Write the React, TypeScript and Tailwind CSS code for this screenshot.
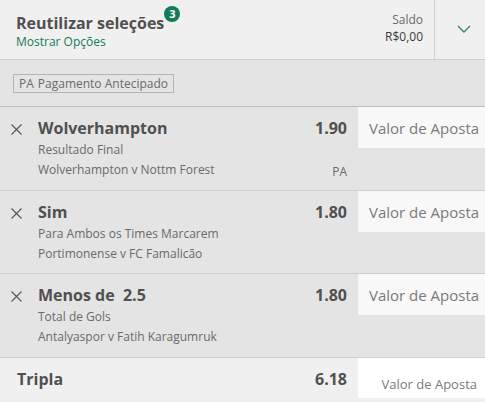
import React from 'react';

interface Selection {
  id: string;
  name: string;
  market: string;
  fixture: string;
  odds: string;
  earlyPayout?: boolean;
}

const selections: Selection[] = [
  {
    id: 'wolves',
    name: 'Wolverhampton',
    market: 'Resultado Final',
    fixture: 'Wolverhampton v Nottm Forest',
    odds: '1.90',
    earlyPayout: true,
  },
  {
    id: 'sim',
    name: 'Sim',
    market: 'Para Ambos os Times Marcarem',
    fixture: 'Portimonense v FC Famalicão',
    odds: '1.80',
  },
  {
    id: 'menos',
    name: 'Menos de  2.5',
    market: 'Total de Gols',
    fixture: 'Antalyaspor v Fatih Karagumruk',
    odds: '1.80',
  },
];

const Header: React.FC = () => (
  <header className="flex h-[60px] border-b border-[#cfcfcf] bg-[#f0f0f0]">
    <div className="flex-1 pl-4 pt-3">
      <div className="flex">
        <h1 className="text-base leading-[22px] font-bold">Reutilizar seleções</h1>
        <span className="-mt-1.5 flex h-4 w-4 items-center justify-center rounded-full bg-[#147b57] text-[11px] leading-4 font-bold text-white">
          3
        </span>
      </div>
      <button className="block text-xs leading-4 text-[#147b57]">Mostrar Opções</button>
    </div>
    <div className="pr-[11px] pt-[11px] text-right text-xs leading-[17px]">
      <div className="text-[#6a6a6a]">Saldo</div>
      <div className="text-[#3c3c3c]">R$0,00</div>
    </div>
    <button
      aria-label="Minimizar"
      className="flex w-[51px] items-center border-l border-[#cfcfcf] pl-[22px]"
    >
      <svg width="14" height="9" viewBox="0 0 14 9" fill="none" stroke="#2f8a6b" strokeWidth="1.4">
        <path d="M1 1l6 6 6-6" />
      </svg>
    </button>
  </header>
);

const SelectionRow: React.FC<{ item: Selection }> = ({ item }) => (
  <li className="flex h-[84px] border-b border-[#cfcfcf] even:h-[83px]">
    <button aria-label={`Remover ${item.name}`} className="w-[38px] self-start pl-[11px] pt-[17px]">
      <svg width="11" height="11" viewBox="0 0 11 11" fill="none" stroke="#555" strokeWidth="1.1">
        <path d="M0.5 0.5l10 10M10.5 0.5l-10 10" />
      </svg>
    </button>
    <div className="flex-1 pt-2.5 text-xs leading-5 text-[#6a6a6a]">
      <h2 className="mb-px text-base leading-[22px] font-bold whitespace-pre text-[#505050]">{item.name}</h2>
      <p>{item.market}</p>
      <p>{item.fixture}</p>
    </div>
    <div className="flex flex-col justify-between pr-[11px] pt-2.5 pb-2 text-right">
      <span className="text-base leading-[22px] font-bold">{item.odds}</span>
      {item.earlyPayout && <span className="text-xs leading-5 text-[#6a6a6a]">PA</span>}
    </div>
    <input
      type="text"
      aria-label={`Valor de Aposta ${item.name}`}
      placeholder="Valor de Aposta"
      className="h-[41px] w-[127px] bg-[#f8f8f8] pl-[11px] text-[15px] placeholder:text-[#7a7a7a]"
    />
  </li>
);

export default function App() {
  return (
    <main className="min-h-screen bg-[#f0f0f0] font-['Open_Sans',sans-serif] text-[#505050]">
      <Header />
      <div className="bg-[#e4e4e4]">
        <div className="flex h-[47px] items-center border-b border-[#bdbdbd] pl-[13px]">
          <div className="flex gap-1 border border-[#b4b4b4] px-[5px] text-xs leading-[17px] text-[#6a6a6a]">
            <span>PA</span>
            <span>Pagamento Antecipado</span>
          </div>
        </div>
        <ul>
          {selections.map((item) => (
            <SelectionRow key={item.id} item={item} />
          ))}
        </ul>
      </div>
      <div className="flex">
        <h2 className="flex-1 pl-[17px] pt-2.5 text-base leading-[22px] font-bold">Tripla</h2>
        <span className="pr-[11px] pt-2.5 text-base leading-[22px] font-bold">6.18</span>
        <input
          type="text"
          aria-label="Valor de Aposta Tripla"
          placeholder="Valor de Aposta"
          className="h-10 w-[127px] bg-white pt-3 pr-2 text-right text-[13px] placeholder:text-[#7a7a7a]"
        />
      </div>
    </main>
  );
}
